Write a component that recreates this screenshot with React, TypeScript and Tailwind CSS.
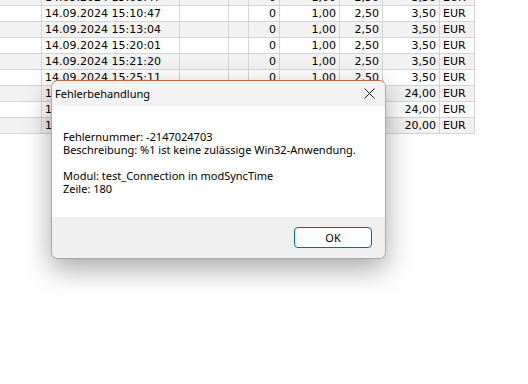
import React from 'react';

const rows = [
  { date: '14.09.2024 15:08:47', qty: '0', a: '1,00', b: '2,50', sum: '3,50' },
  { date: '14.09.2024 15:10:47', qty: '0', a: '1,00', b: '2,50', sum: '3,50' },
  { date: '14.09.2024 15:13:04', qty: '0', a: '1,00', b: '2,50', sum: '3,50' },
  { date: '14.09.2024 15:20:01', qty: '0', a: '1,00', b: '2,50', sum: '3,50' },
  { date: '14.09.2024 15:21:20', qty: '0', a: '1,00', b: '2,50', sum: '3,50' },
  { date: '14.09.2024 15:25:11', qty: '0', a: '1,00', b: '2,50', sum: '3,50' },
  { date: '14.09.2024 15:31:40', qty: '0', a: '8,00', b: '16,00', sum: '24,00' },
  { date: '14.09.2024 15:33:02', qty: '0', a: '8,00', b: '16,00', sum: '24,00' },
  { date: '14.09.2024 15:40:18', qty: '0', a: '6,00', b: '14,00', sum: '20,00' },
];

const cell = 'border-r border-b border-[#d4d4d4] px-[3px] leading-[15px] h-[16px] overflow-hidden whitespace-nowrap';

function DataSheet() {
  return (
    <div className="-mt-[10px] w-[475px] font-['DejaVu_Sans',sans-serif] text-[11px] text-black">
      {rows.map((r, i) => (
        <div
          key={i}
          className={`grid grid-cols-[42px_138px_49px_20px_31px_60px_43px_57px_35px] ${
            i % 2 === 0 ? 'bg-[#f2f2f2]' : 'bg-white'
          }`}
        >
          <div className={cell}></div>
          <div className={cell}>{r.date}</div>
          <div className={cell}></div>
          <div className={cell}></div>
          <div className={`${cell} text-right`}>{r.qty}</div>
          <div className={`${cell} text-right`}>{r.a}</div>
          <div className={`${cell} text-right`}>{r.b}</div>
          <div className={`${cell} text-right`}>{r.sum}</div>
          <div className={cell}>EUR</div>
        </div>
      ))}
    </div>
  );
}

function ErrorDialog() {
  return (
    <div className="absolute left-[51px] top-[80px] w-[335px] h-[179px] flex flex-col rounded-[7px] border border-[#a9a9a9] border-t-[#c4683f] bg-white overflow-hidden shadow-[0_10px_28px_rgba(0,0,0,0.35)] font-['Noto_Sans',sans-serif] text-[11px] text-black">
      <div className="h-[25px] flex items-center justify-between bg-[#f3f3f3] pl-[3px] pr-[9px]">
        <span className="text-[11px] leading-[14px]">Fehlerbehandlung</span>
        <svg width="11" height="11" viewBox="0 0 11 11" className="mr-[1px]">
          <path d="M0.5 0.5 L10.5 10.5 M10.5 0.5 L0.5 10.5" stroke="#1a1a1a" strokeWidth="1" />
        </svg>
      </div>
      <div className="h-[111px] bg-white pl-[11px] pt-[24px] leading-[13px]">
        <p>Fehlernummer: -2147024703</p>
        <p>Beschreibung: %1 ist keine zulässige Win32-Anwendung.</p>
        <p className="mt-[13px]">Modul: test_Connection in modSyncTime</p>
        <p>Zeile: 180</p>
      </div>
      <div className="flex-1 flex items-center justify-end bg-[#f0f0f0] pr-[13px] pb-[1px]">
        <button className="w-[78px] h-[21px] rounded-[4px] border border-[#0067c0] bg-[#fdfdfd] text-[11px] leading-none">
          OK
        </button>
      </div>
    </div>
  );
}

export default function App() {
  return (
    <div className="relative w-[528px] h-[384px] overflow-hidden bg-white">
      <DataSheet />
      <ErrorDialog />
    </div>
  );
}
